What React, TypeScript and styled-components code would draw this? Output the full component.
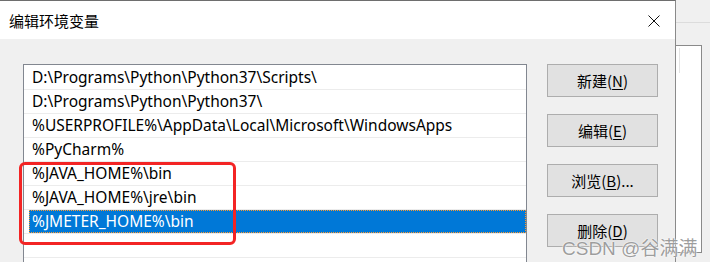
import React from "react";
import styled, { createGlobalStyle } from "styled-components";

const GlobalStyle = createGlobalStyle`
    html, body {
        margin: 0;
        padding: 0;
        background: #f0f0f0;
        overflow: hidden;
    }
    body {
        font-family: "Noto Sans", "Noto Sans CJK SC", sans-serif;
    }
`;

type Entry = {
    path: string;
    selected?: boolean;
};

const entries: Entry[] = [
    { path: "D:\\Programs\\Python\\Python37\\Scripts\\" },
    { path: "D:\\Programs\\Python\\Python37\\" },
    { path: "%USERPROFILE%\\AppData\\Local\\Microsoft\\WindowsApps" },
    { path: "%PyCharm%" },
    { path: "%JAVA_HOME%\\bin" },
    { path: "%JAVA_HOME%\\jre\\bin" },
    { path: "%JMETER_HOME%\\bin", selected: true },
    { path: "" },
];

const buttons = [
    { label: "新建", key: "N", suffix: "" },
    { label: "编辑", key: "E", suffix: "" },
    { label: "浏览", key: "B", suffix: "..." },
    { label: "删除", key: "D", suffix: "" },
];

export default function App() {
    return (
        <Page>
            <GlobalStyle />
            <Dialog>
                <TitleBar>
                    <Title>编辑环境变量</Title>
                    <CloseIcon width="12" height="12" viewBox="0 0 12 12">
                        <path d="M0.5 0.5 L11.5 11.5 M11.5 0.5 L0.5 11.5" stroke="#111" strokeWidth="1" />
                    </CloseIcon>
                </TitleBar>
                <Body>
                    <ListBox>
                        {entries.map((entry, i) => (
                            <Row key={i}>
                                <Cell $selected={entry.selected}>{entry.path}</Cell>
                            </Row>
                        ))}
                    </ListBox>
                    <ButtonColumn>
                        {buttons.map((b) => (
                            <Button key={b.key}>
                                {b.label}(<u>{b.key}</u>){b.suffix}
                            </Button>
                        ))}
                    </ButtonColumn>
                </Body>
                <Highlight />
                <Watermark>CSDN @谷满满</Watermark>
            </Dialog>
            <Backdrop>
                <BackdropTop />
                <BackdropPanel>
                    <PanelLine />
                </BackdropPanel>
            </Backdrop>
        </Page>
    );
}

const Page = styled.div`
    display: flex;
    width: 710px;
    height: 262px;
    overflow: hidden;
`;

const Dialog = styled.div`
    position: relative;
    z-index: 1;
    width: 675px;
    flex: none;
    border-top: 1px solid #6e6e6e;
    border-right: 1px solid #8a8a8a;
    display: flex;
    flex-direction: column;
    overflow: visible;
`;

const TitleBar = styled.div`
    flex: none;
    height: 38px;
    background: #ffffff;
    display: flex;
    align-items: center;
    justify-content: space-between;
    padding: 0 15px 0 9px;
`;

const Title = styled.div`
    font-family: "Noto Sans CJK SC", sans-serif;
    font-size: 15px;
    color: #000;
    margin-top: 1px;
`;

const CloseIcon = styled.svg`
    display: block;
    margin-top: 1px;
`;

const Body = styled.div`
    flex: 1;
    min-height: 0;
    overflow: hidden;
    background: #f0f0f0;
    display: flex;
    align-items: flex-start;
    padding: 25px 0 0 23px;
    gap: 20px;
`;

const ListBox = styled.div`
    flex: none;
    width: 502px;
    height: 260px;
    background: #ffffff;
    border: 1px solid #828790;
    padding-top: 1px;
`;

const Row = styled.div`
    height: 23px;
    border-bottom: 1px solid #ececec;
    display: flex;
`;

const Cell = styled.div<{ $selected?: boolean }>`
    flex: 1;
    margin-left: 5px;
    padding-left: 2px;
    box-sizing: border-box;
    font-family: "Noto Sans", "Noto Sans CJK SC", sans-serif;
    font-size: 15.5px;
    line-height: 21px;
    white-space: nowrap;
    color: ${({ $selected }) => ($selected ? "#ffffff" : "#000000")};
    background: ${({ $selected }) => ($selected ? "#0078d7" : "transparent")};
    border: 1px dotted ${({ $selected }) => ($selected ? "#ff9a2e" : "transparent")};
`;

const ButtonColumn = styled.div`
    display: flex;
    flex-direction: column;
    gap: 17px;
`;

const Button = styled.div`
    width: 109px;
    height: 31px;
    background: #e1e1e1;
    border: 1px solid #adadad;
    display: flex;
    align-items: center;
    justify-content: center;
    font-family: "Noto Sans CJK SC", sans-serif;
    font-size: 15px;
    color: #000;

    u {
        text-decoration-thickness: 1px;
        text-underline-offset: 2px;
    }
`;

const Highlight = styled.div`
    position: absolute;
    left: 19px;
    top: 161px;
    width: 211px;
    height: 77px;
    border: 3px solid #f32424;
    border-radius: 6px;
    pointer-events: none;
`;

const Watermark = styled.div`
    position: absolute;
    left: 562px;
    top: 232px;
    font-family: "Liberation Sans", "Noto Sans CJK SC", sans-serif;
    font-size: 19px;
    color: rgba(140, 140, 140, 0.85);
    text-shadow: 0 0 1px #fff, 0 0 2px #fff;
    white-space: nowrap;
    pointer-events: none;
`;

const Backdrop = styled.div`
    flex: 1;
    display: flex;
    flex-direction: column;
    background: #f0f0f0;
`;

const BackdropTop = styled.div`
    height: 22px;
    border-bottom: 1px solid #dcdcdc;
    margin-bottom: 22px;
`;

const BackdropPanel = styled.div`
    width: 25px;
    height: 206px;
    background: #ffffff;
    border: 1px solid #8a8a8a;
    border-left: none;
    position: relative;
`;

const PanelLine = styled.div`
    margin-left: 3px;
    margin-top: 2px;
    width: 1px;
    height: 25px;
    background: #e4e4e4;
`;
